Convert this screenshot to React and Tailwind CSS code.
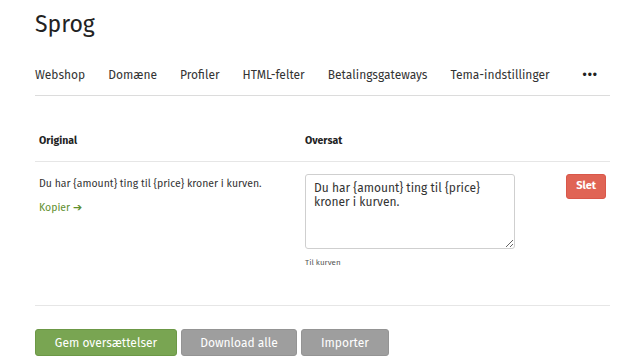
export default function App() {
  const tabs = ['Webshop', 'Domæne', 'Profiler', 'HTML-felter', 'Betalingsgateways', 'Tema-indstillinger']
  return (
    <div className="min-h-[364px] bg-white pl-[35px] pr-[30px] text-[#222]" style={{ fontFamily: '"Fira Sans", "Open Sans", "Noto Sans", sans-serif' }}>
      <h1 className="pt-[8px] text-[23px] font-normal leading-[32px] text-[#222]">Sprog</h1>
      <nav className="mt-[25px] flex items-center border-b border-[#dcdcdc] pb-[10px] pr-[12px]">
        <div className="flex gap-[23px] whitespace-nowrap text-[12px] leading-[20px] text-[#333]">
          {tabs.map((t) => (
            <span key={t}>{t}</span>
          ))}
        </div>
        <span className="ml-auto text-[12px] font-bold leading-[20px] tracking-[1px]">•••</span>
      </nav>
      <div className="mt-[38px] grid grid-cols-[270px_1fr] border-b border-[#e6e6e6] pb-[13px] text-[10.5px] font-bold leading-[14px]">
        <span className="pl-[4px]">Original</span>
        <span>Oversat</span>
      </div>
      <div className="grid grid-cols-[270px_1fr] border-b border-[#e6e6e6] pb-[37px] pt-[12px]">
        <div className="pl-[4px] pt-[2px]">
          <p className="text-[10.5px] leading-[16px] text-[#333]">Du har {'{amount}'} ting til {'{price}'} kroner i kurven.</p>
          <p className="mt-[8px] text-[10.5px] leading-[16px] text-[#5f8f2f]">Kopier ➔</p>
        </div>
        <div className="flex items-start">
          <div>
            <textarea
              className="block h-[75px] w-[210px] resize-y rounded-[3px] border border-[#cfcfcf] px-[8px] py-[6px] text-[12px] leading-[14px] text-[#333] outline-none"
              defaultValue="Du har {amount} ting til {price} kroner i kurven."
            />
            <p className="mt-[9px] text-[8px] leading-[10px] text-[#555]">Til kurven</p>
          </div>
          <button className="ml-auto mr-[4px] h-[25px] rounded-[3px] border border-[#d9574a] bg-[#e06455] px-[9px] text-[11px] font-bold text-white">
            Slet
          </button>
        </div>
      </div>
      <div className="mt-[23px] flex gap-[4px] text-[12px] leading-[16px] text-white">
        <button className="h-[27px] w-[142px] rounded-[3px] border border-[#6c9846] bg-[#79a552]">Gem oversættelser</button>
        <button className="h-[27px] w-[116px] rounded-[3px] border border-[#949494] bg-[#9e9e9e]">Download alle</button>
        <button className="h-[27px] w-[88px] rounded-[3px] border border-[#949494] bg-[#9e9e9e]">Importer</button>
      </div>
    </div>
  )
}
